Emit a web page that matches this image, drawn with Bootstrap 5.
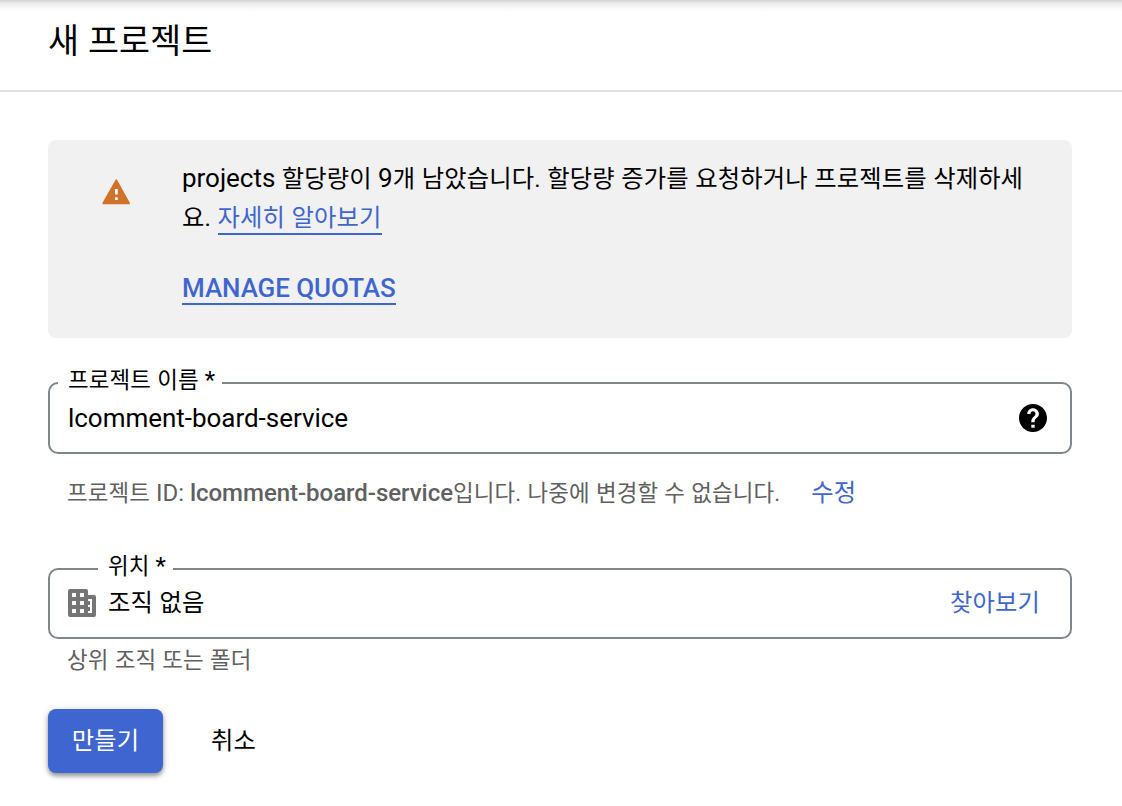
<!DOCTYPE html>
<html lang="ko">
<head>
<meta charset="utf-8">
<meta name="viewport" content="width=device-width, initial-scale=1">
<title>새 프로젝트</title>
<link href="https://cdn.jsdelivr.net/npm/bootstrap@5.3.0/dist/css/bootstrap.min.css" rel="stylesheet">
<style>
  body { font-family: Roboto, "Noto Sans CJK KR", sans-serif; font-size: 26px; line-height: 40px; color: #000; background: #fff; min-height: 100vh; letter-spacing: -.03px; }
  /* Hangul is set slightly smaller than the Latin text around it */
  .ko { font-size: .935em; word-spacing: .4px; letter-spacing: .13px; }
  .top-shade { height: 12px; margin-bottom: -12px; background: linear-gradient(#d2d2d2, #ececec 30%, #fafafa 70%, #fff); }
  .page-head { height: 92px; border-bottom: 2px solid #e0e0e0; position: relative; }
  .page-head h1 { font-size: 36px; line-height: 48px; font-weight: 400; padding-top: 17px; }
  .page-main { padding: 48px 50px 0 48px; }
  .quota { height: 198px; background: #f1f1f1; border-radius: 8px; padding: 19px 40px 0 54px; }
  .quota-icon { width: 28px; height: 26px; margin: 20px 52px 0 0; }
  .quota p { margin: 0 0 32px; height: 78px; line-height: 39px; }
  .blue-link { color: #3f66d0; text-decoration: none; }
  .lined { display: inline-block; line-height: 32px; height: 34px; border-bottom: 2px solid #3f66d0; }
  .manage { display: block; width: 214px; height: 36px; font-weight: 500; line-height: 38px; letter-spacing: -.08px; }
  .field { position: relative; height: 72px; border: 2px solid #80868b; border-radius: 10px; padding: 0 23px 0 18px; }
  .field-name { margin-top: 44px; }
  .field-place { margin-top: 55px; height: 71px; padding: 0 30px 2px 18px; }
  .field-label { position: absolute; top: -22px; left: 8px; padding: 0 7px 0 10px; background: #fff; font-size: 24px; line-height: 36px; }
  .field-place .field-label { left: 48px; }
  .hint { font-size: 24px; color: #5f6060; padding-left: 19px; }
  .hint-id { margin-top: 19px; }
  .hint-id b { font-weight: 500; }
  .hint-id .blue-link { font-size: 26px; margin: -2px 0 0 31px; }
  .hint-place { margin-top: 1px; }
  .create { width: 115px; height: 64px; padding: 0 0 2px; border: 0; border-radius: 8px; background: #3f66d0; color: #fff; font-size: 26px; box-shadow: 0 3px 4px rgba(0,0,0,.36), 0 1px 8px rgba(0,0,0,.14); }
  .cancel { padding: 0 0 2px; border: 0; margin-left: 48px; font-size: 26px; color: #000; }
  .actions { margin-top: 29px; }
</style>
</head>
<body>
<div class="top-shade"></div>
<header class="page-head px-5">
  <h1 class="m-0"><span class="ko">새 프로젝트</span></h1>
</header>
<main class="page-main">
  <section class="quota d-flex">
    <svg class="quota-icon flex-shrink-0" viewBox="0 0 28 26" aria-hidden="true">
      <path fill="#d0722a" d="M13.5.8q.8-1 1.600 0L27.900 24q.4 1.300-.8 1.300H1.200q-1.200 0-.8-1.300z"/>
      <path fill="#fff" d="M13 10h2.700v5.600H13zM13 18.300h2.700V21H13z"/>
    </svg>
    <div class="flex-grow-1">
      <p>projects <span class="ko">할당량이</span> 9<span class="ko">개 남았습니다. 할당량 증가를 요청하거나 프로젝트를 삭제하세<br>요. </span><a href="#" class="blue-link lined"><span class="ko">자세히 알아보기</span></a></p>
      <a href="#" class="blue-link lined manage">MANAGE QUOTAS</a>
    </div>
  </section>

  <div class="field field-name d-flex align-items-center">
    <label class="field-label"><span class="ko">프로젝트 이름</span> *</label>
    <span class="flex-grow-1">lcomment-board-service</span>
    <svg width="28" height="28" viewBox="2 2 20 20" aria-hidden="true"><path d="M12 2C6.480 2 2 6.480 2 12s4.480 10 10 10 10-4.480 10-10S17.520 2 12 2zm1.200 17h-2.400v-2.200h2.400V19zm2.070-7.750l-.9.920C13.450 12.900 13.200 13.500 13.200 15h-2.400v-.5c0-1.100.450-2.100 1.170-2.830l1.240-1.260c.370-.360.590-.860.590-1.410 0-1.100-.8-1.800-1.800-1.800s-1.800.8-1.800 1.900H7.900c0-2.210 1.790-4 4.100-4s4.200 1.790 4.200 4c0 .880-.360 1.580-.930 2.150z"/></svg>
  </div>
  <div class="hint hint-id d-flex align-items-center">
    <span><span class="ko">프로젝트</span> ID: <b>lcomment-board-service</b><span class="ko">입니다. 나중에 변경할 수 없습니다.</span></span>
    <a href="#" class="blue-link"><span class="ko">수정</span></a>
  </div>

  <div class="field field-place d-flex align-items-center">
    <label class="field-label"><span class="ko">위치</span> *</label>
    <svg class="me-2 flex-shrink-0" width="32" height="28" viewBox="0 0 32 28" aria-hidden="true">
      <path fill="#757575" fill-rule="evenodd" d="M2 0h16q2 0 2 2v4h6q2 0 2 2v18q0 2-2 2H2q-2 0-2-2V2q0-2 2-2zM4 4v4h4V4zm8 0v4h4V4zM4 12v4h4v-4zm8 0v4h4v-4zM4 20v4h4v-4zm8 0v4h4v-4zM20 10h4v14h-4v-2h2v-4h-2v-2h2v-4h-2z"/>
    </svg>
    <span class="flex-grow-1"><span class="ko">조직 없음</span></span>
    <a href="#" class="blue-link"><span class="ko">찾아보기</span></a>
  </div>
  <div class="hint hint-place"><span class="ko">상위 조직 또는 폴더</span></div>

  <div class="actions d-flex align-items-center">
    <button type="button" class="btn create"><span class="ko">만들기</span></button>
    <button type="button" class="btn cancel"><span class="ko">취소</span></button>
  </div>
</main>
<script src="https://cdn.jsdelivr.net/npm/bootstrap@5.3.0/dist/js/bootstrap.bundle.min.js"></script>
</body>
</html>
